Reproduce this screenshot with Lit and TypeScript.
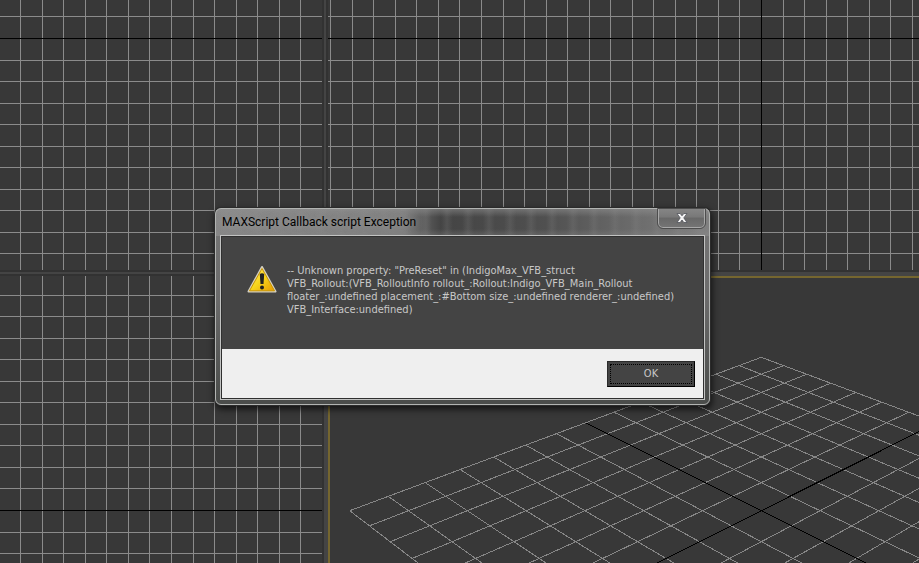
import { LitElement, html, svg, css } from "lit";
import { customElement, property } from "lit/decorators.js";

/** Orthographic viewport: square grid with black axes. */
@customElement("ortho-view")
class OrthoView extends LitElement {
  @property({ type: Number }) originX = 0;
  @property({ type: Number }) originY = 0;

  static styles = css`
    :host { display: block; overflow: hidden; background: #383838; }
    .plane { display: block; width: 100%; height: 100%; shape-rendering: crispEdges; }
    .line { fill: #8b8b8b; }
    .axis { fill: #000; }
  `;

  render() {
    const step = 21.54;
    const range = Array.from({ length: 201 }, (_, i) => i - 100).filter((i) => i !== 0);
    const at = (origin: number, i: number) => Math.round(origin + i * step);
    return html`<svg class="plane" aria-hidden="true">
      ${range.map((i) => svg`
        <rect class="line" x=${at(this.originX, i)} y="0" width="1" height="100%"></rect>
        <rect class="line" x="0" y=${at(this.originY, i)} width="100%" height="1"></rect>`)}
      <rect class="axis" x=${this.originX} y="0" width="1" height="100%"></rect>
      <rect class="axis" x="0" y=${this.originY} width="100%" height="1"></rect>
    </svg>`;
  }
}

/** Perspective viewport: a 14 by 14 ground grid seen corner on. */
@customElement("perspective-view")
class PerspectiveView extends LitElement {
  static styles = css`
    :host { display: block; overflow: hidden; background: #383838; border: solid #75662f; border-width: 2px 0 0 2px; }
    .plane { display: block; width: 100%; height: 100%; }
    .line { stroke: #868686; stroke-width: 1; shape-rendering: crispEdges; }
    .axis { stroke: #000; stroke-width: 1; shape-rendering: crispEdges; }
  `;

  private project(i: number, j: number) {
    const depth = (i + j) / 2;
    const w = 1 + 0.04927 * depth;
    return { x: 431.3 + (29.4 * (i - j)) / w, y: (510.7 - 4.31 * depth) / w - 278 };
  }

  private edge(name: string, a: [number, number], b: [number, number]) {
    const p = this.project(...a);
    const q = this.project(...b);
    return svg`<line class=${name} x1=${p.x} y1=${p.y} x2=${q.x} y2=${q.y}></line>`;
  }

  render() {
    const ticks = Array.from({ length: 15 }, (_, i) => i - 7).filter((i) => i !== 0);
    return html`<svg class="plane" aria-hidden="true">
      ${ticks.map((t) => [this.edge("line", [t, -7], [t, 7]), this.edge("line", [-7, t], [7, t])])}
      ${this.edge("axis", [0, -7], [0, 7])}
      ${this.edge("axis", [-7, 0], [7, 0])}
    </svg>`;
  }
}

@customElement("message-dialog")
class MessageDialog extends LitElement {
  @property() heading = "";

  static styles = css`
    :host { display: block; width: 495px; max-width: 100%; }
    .frame {
      box-sizing: border-box;
      border: 1px solid #b2b4b2;
      border-radius: 6px;
      padding: 0 4px 4px;
      background:
        linear-gradient(rgba(150, 150, 150, 0.5), transparent 8px, transparent 20px, rgba(140, 140, 140, 0.3) 26px) top / 100% 27px no-repeat,
        repeating-linear-gradient(90deg, rgba(140, 140, 140, 0.2) 0, transparent 6px, transparent 15px, rgba(140, 140, 140, 0.2) 21px) top / 100% 27px no-repeat,
        linear-gradient(90deg, #868686 0, #7d7d7d 185px, #444 225px, #505050 330px, #6c6c6c 420px, #808080 100%) top / 100% 27px no-repeat,
        linear-gradient(#777 0, #6b6b6b 90px, #4b4d4b 190px);
      box-shadow: 0 0 0 1px #2b2b2b, 1px 3px 7px 1px rgba(0, 0, 0, 0.7);
    }
    .titlebar { display: flex; justify-content: space-between; height: 26px; padding-left: 2px; }
    .title {
      margin: 0;
      font: 400 12px/26px Roboto, "Open Sans", sans-serif;
      color: #000;
      white-space: nowrap;
      text-shadow: 0 0 8px #aaa;
    }
    .close {
      width: 47px;
      height: 19px;
      margin: 0;
      padding: 0;
      display: grid;
      place-items: center;
      border: 1px solid #a8a8a8;
      border-top: 0;
      border-radius: 0 0 5px 5px;
      outline: 1px solid #4d4d4d;
      background: linear-gradient(#858585 0, #787878 45%, #686868 50%, #747474 100%);
    }
    .client { border: 1px solid #c2c3c2; }
    .inner { border: 1px solid #303030; }
    .body {
      display: flex;
      gap: 9px;
      height: 112px;
      box-sizing: border-box;
      padding: 27px 20px 0 24px;
      background: #444;
    }
    .warning { flex: none; width: 32px; height: 32px; }
    .message {
      margin: 0;
      font: 11px/13px "DejaVu Sans Condensed", sans-serif;
      color: #c8c8c8;
    }
    .line { display: block; white-space: nowrap; }
    .footer { display: flex; justify-content: flex-end; padding: 12px 8px 11px; background: #efefef; }
    .ok {
      width: 88px;
      height: 26px;
      padding: 2px;
      border: 1px solid;
      border-color: #2b2b2b #000 #000 #2b2b2b;
      background: #444;
      color: #c8c8c8;
      font: 11px/18px "DejaVu Sans Condensed", sans-serif;
    }
    .focus { display: block; border: 1px dotted #000; }
  `;

  render() {
    return html`<section class="frame" role="alertdialog" aria-labelledby="title" aria-describedby="message">
      <header class="titlebar">
        <h1 class="title" id="title">${this.heading}</h1>
        <button class="close" type="button" aria-label="Close">
          <svg width="12" height="10" viewBox="0 0 12 10" aria-hidden="true">
            <path d="M1 .5h3.2L6 2.8 7.8.5H11L7.8 4.9 11 9.5H7.8L6 7 4.200 9.500H1l3.200-4.600z" fill="#f4f4f4" stroke="#50535a" stroke-width=".8"></path>
          </svg>
        </button>
      </header>
      <div class="client"><div class="inner">
        <div class="body">
          <svg class="warning" viewBox="0 0 32 32" aria-hidden="true">
            <defs>
              <linearGradient id="gold" x1="0" y1="0" x2="1" y2="1">
                <stop offset="0" stop-color="#ffe97a"></stop>
                <stop offset=".5" stop-color="#f8d51b"></stop>
                <stop offset="1" stop-color="#e79b00"></stop>
              </linearGradient>
            </defs>
            <path d="M16 3 29.500 27.500h-27z" fill="#d5d0c0" stroke="#d5d0c0" stroke-width="2" stroke-linejoin="round"></path>
            <path d="M16 4.500 28.500 26.800h-25z" fill="url(#gold)" stroke="#c99500" stroke-linejoin="round"></path>
            <path d="M13.800 10q2.200-1.500 4.400 0l-.7 10h-3z" fill="#222"></path>
            <circle cx="16" cy="23.500" r="2" fill="#222"></circle>
          </svg>
          <p class="message" id="message">
            <span class="line">-- Unknown property: "PreReset" in (IndigoMax_VFB_struct</span>
            <span class="line">VFB_Rollout:(VFB_RolloutInfo rollout_:Rollout:Indigo_VFB_Main_Rollout</span>
            <span class="line">floater_:undefined placement_:#Bottom size_:undefined renderer_:undefined)</span>
            <span class="line">VFB_Interface:undefined)</span>
          </p>
        </div>
        <footer class="footer"><button class="ok" type="button"><span class="focus">OK</span></button></footer>
      </div></div>
    </section>`;
  }
}

@customElement("app-root")
class AppRoot extends LitElement {
  static styles = css`
    :host { display: block; position: relative; height: 100vh; overflow: hidden; background: #444; }
    .views {
      display: grid;
      grid-template: 270px minmax(0, 1fr) / 322px minmax(0, 1fr);
      gap: 6px;
      height: 100%;
      background: #444;
    }
    .view { box-shadow: 0 0 0 2px #323232; }
    .overlay {
      position: absolute;
      inset: 0;
      display: grid;
      place-items: center;
      padding: 50px 0 0 6px;
    }
  `;

  render() {
    return html`
      <main class="views">
        <ortho-view class="view" originX="451" originY="38"></ortho-view>
        <ortho-view class="view" originX="433" originY="38"></ortho-view>
        <ortho-view class="view" originX="451" originY="234"></ortho-view>
        <perspective-view></perspective-view>
      </main>
      <div class="overlay"><message-dialog heading="MAXScript Callback script Exception"></message-dialog></div>
    `;
  }
}
